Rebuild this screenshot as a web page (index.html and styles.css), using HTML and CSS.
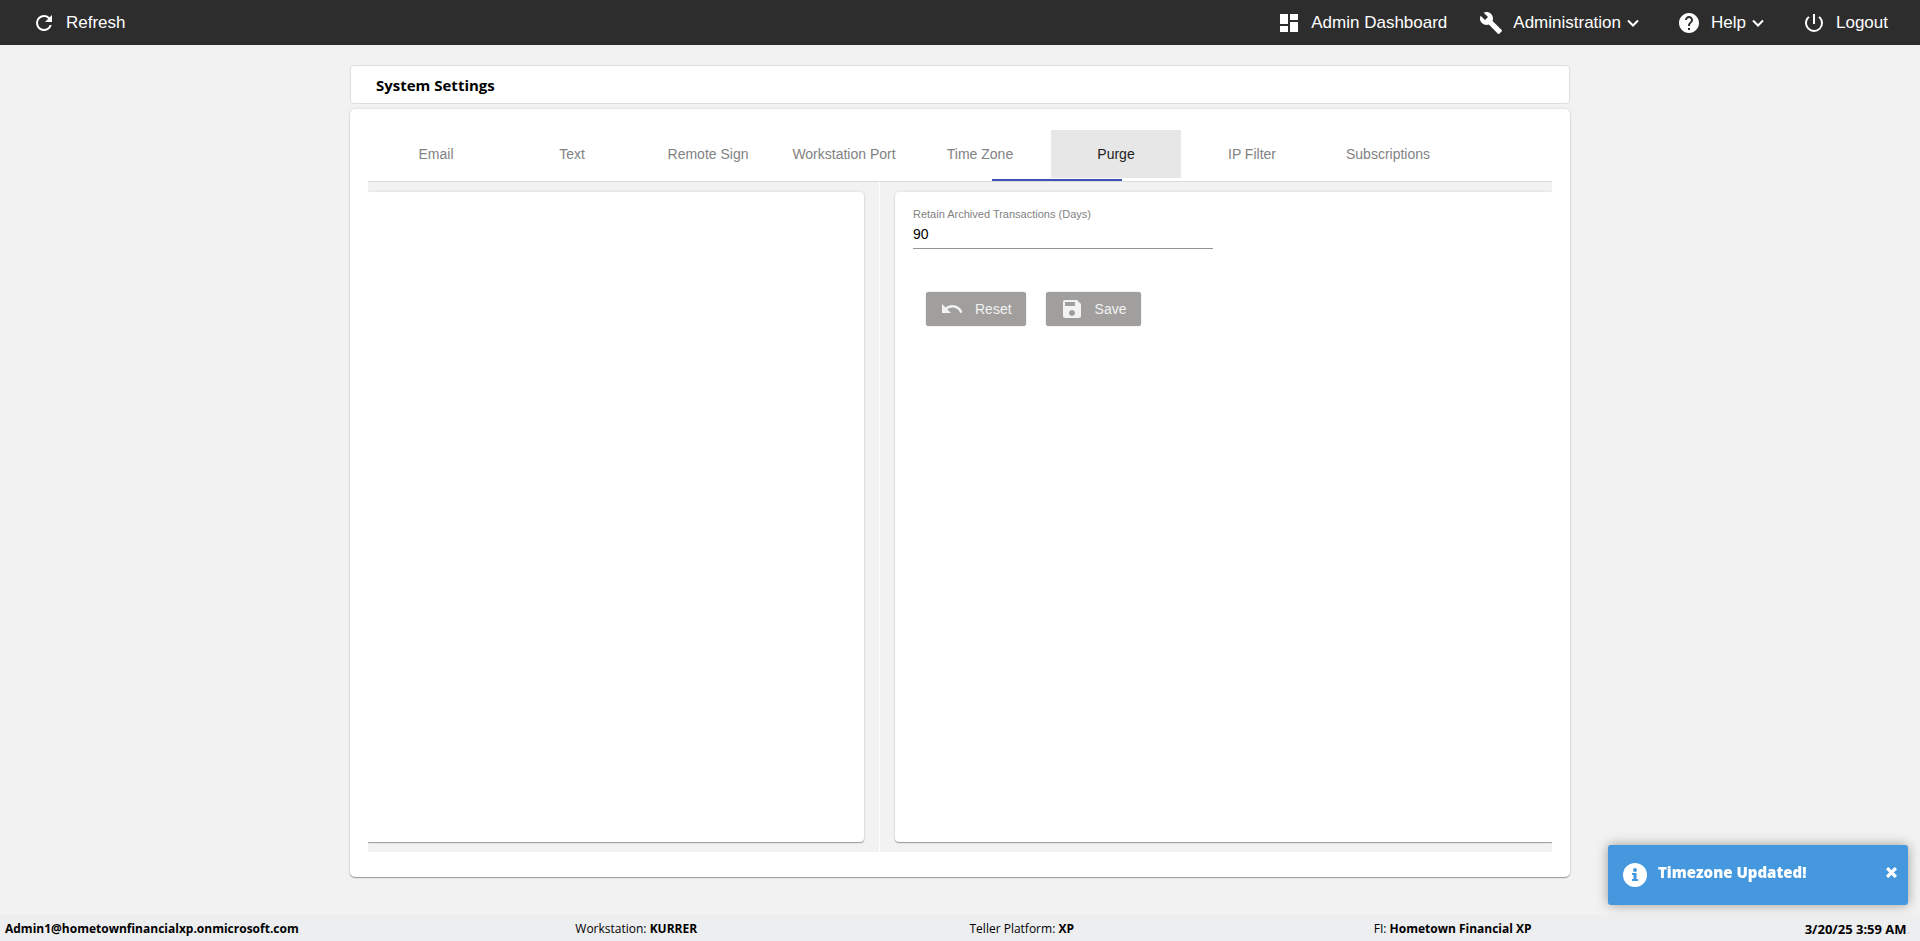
FILE: index.html
```html
<!DOCTYPE html>
<html lang="en">
<head>
<meta charset="utf-8">
<title>System Settings</title>
<link rel="stylesheet" href="styles.css">
</head>
<body>
<header class="topbar">
  <button class="nav-item nav-refresh" type="button">
    <svg class="icon" viewBox="0 0 24 24"><path d="M17.65 6.35A7.96 7.96 0 0 0 12 4a8 8 0 1 0 7.73 10h-2.08A6 6 0 1 1 12 6c1.66 0 3.14.69 4.22 1.78L13 11h7V4z"/></svg>
    <span>Refresh</span>
  </button>
  <nav class="nav-right">
    <a class="nav-item nav-dashboard" href="#">
      <svg class="icon" viewBox="0 0 24 24"><path d="M3 13h8V3H3v10zm0 8h8v-6H3v6zm10 0h8V11h-8v10zm0-18v6h8V3h-8z"/></svg>
      <span>Admin Dashboard</span>
    </a>
    <button class="nav-item nav-admin" type="button">
      <svg class="icon" viewBox="0 0 24 24"><path d="M22.7 19l-9.1-9.1c.9-2.3.4-5-1.5-6.9-2-2-5-2.4-7.4-1.3L9 6 6 9 1.6 4.7C.4 7.1.9 10.1 2.9 12.1c1.9 1.9 4.6 2.4 6.9 1.5l9.1 9.1c.4.4 1 .4 1.4 0l2.3-2.3c.5-.4.5-1.1.1-1.4z"/></svg>
      <span>Administration</span>
      <svg class="chevron" viewBox="0 0 12 8"><path d="M1 1.5l5 5 5-5"/></svg>
    </button>
    <button class="nav-item nav-help" type="button">
      <svg class="icon" viewBox="0 0 24 24"><path d="M12 2C6.48 2 2 6.48 2 12s4.48 10 10 10 10-4.48 10-10S17.52 2 12 2zm1 17h-2v-2h2v2zm2.07-7.75l-.9.92C13.45 12.9 13 13.5 13 15h-2v-.5c0-1.1.45-2.1 1.17-2.83l1.24-1.26c.37-.36.59-.86.59-1.41 0-1.1-.9-2-2-2s-2 .9-2 2H8c0-2.21 1.79-4 4-4s4 1.79 4 4c0 .88-.36 1.68-.93 2.25z"/></svg>
      <span>Help</span>
      <svg class="chevron" viewBox="0 0 12 8"><path d="M1 1.5l5 5 5-5"/></svg>
    </button>
    <button class="nav-item nav-logout" type="button">
      <svg class="icon" viewBox="0 0 24 24"><path d="M13 3h-2v10h2V3zm4.83 2.17l-1.42 1.42A6.92 6.92 0 0 1 19 12a7 7 0 1 1-11.42-5.42L6.17 5.17A8.93 8.93 0 0 0 3 12a9 9 0 0 0 18 0c0-2.74-1.23-5.18-3.17-6.83z"/></svg>
      <span>Logout</span>
    </button>
  </nav>
</header>

<main class="page">
  <h1 class="title-card">System Settings</h1>
  <section class="settings-card">
    <div class="tabs" role="tablist">
      <button class="tab" type="button" role="tab">Email</button>
      <button class="tab" type="button" role="tab">Text</button>
      <button class="tab" type="button" role="tab">Remote Sign</button>
      <button class="tab" type="button" role="tab">Workstation Port</button>
      <button class="tab" type="button" role="tab">Time Zone</button>
      <button class="tab tab-active" type="button" role="tab" aria-selected="true">Purge</button>
      <button class="tab" type="button" role="tab">IP Filter</button>
      <button class="tab" type="button" role="tab">Subscriptions</button>
      <span class="ink-bar"></span>
    </div>
    <div class="panes">
      <div class="pane pane-left"><div class="panel panel-left"></div></div>
      <div class="pane pane-right">
        <form class="panel panel-right">
          <label class="field-label" for="retain-days">Retain Archived Transactions (Days)</label>
          <input class="field-input" id="retain-days" type="text" value="90">
          <div class="actions">
            <button class="btn" type="button">
              <svg class="icon" viewBox="0 0 24 24"><path d="M12.5 8c-2.65 0-5.05.99-6.9 2.6L2 7v9h9l-3.62-3.62c1.39-1.16 3.16-1.88 5.12-1.88 3.54 0 6.55 2.31 7.6 5.5l2.37-.78C21.08 11.03 17.15 8 12.5 8z"/></svg>
              <span>Reset</span>
            </button>
            <button class="btn" type="button">
              <svg class="icon" viewBox="0 0 24 24"><path d="M17 3H5a2 2 0 0 0-2 2v14c0 1.1.89 2 2 2h14c1.1 0 2-.9 2-2V7l-4-4zm-5 16c-1.66 0-3-1.34-3-3s1.34-3 3-3 3 1.34 3 3-1.34 3-3 3zm3-10H5V5h10v4z"/></svg>
              <span>Save</span>
            </button>
          </div>
        </form>
      </div>
    </div>
  </section>
</main>

<footer class="statusbar">
  <div><b>Admin1@hometownfinancialxp.onmicrosoft.com</b></div>
  <div>Workstation: <b>KURRER</b></div>
  <div>Teller Platform: <b>XP</b></div>
  <div>FI: <b>Hometown Financial XP</b></div>
  <div class="clock"><b>3/20/25 3:59 AM</b><span class="dot">.</span></div>
</footer>

<div class="toast" role="status">
  <svg class="icon" viewBox="0 0 24 24"><circle cx="12" cy="12" r="12" fill="#fff"/><circle cx="12" cy="7" r="2" fill="#4598de"/><path fill="#4598de" d="M9 10h4.500v6H15v2H9v-2h1.500v-4H9z"/></svg>
  <span class="toast-text">Timezone Updated!</span>
  <button class="toast-close" type="button" aria-label="Close"><svg viewBox="0 0 10 10"><path d="M1 1l8 8m0-8l-8 8"/></svg></button>
</div>
</body>
</html>
```
FILE: styles.css
```css
* { box-sizing: border-box; }

body {
  margin: 0;
  min-height: 100vh;
  display: flex;
  flex-direction: column;
  background: #f2f2f2;
  color: #000;
  font-family: "Liberation Sans", Arial, sans-serif;
  font-size: 14px;
}

button {
  font: inherit;
  border: 0;
  padding: 0;
  background: none;
  cursor: pointer;
}

svg { display: block; flex: none; }
.icon { width: 24px; height: 24px; }

/* Top bar */
.topbar {
  display: flex;
  justify-content: space-between;
  height: 45px;
  padding: 0 32px;
  background: #2d2d2d;
}

.nav-right { display: flex; }

.nav-item {
  display: flex;
  align-items: center;
  gap: 10px;
  color: #fff;
  font-size: 17px;
  text-decoration: none;
}

.nav-item svg { fill: #fff; }
.nav-dashboard { margin-right: 32px; }
.nav-admin, .nav-help { margin-right: 38px; }
.nav-item .chevron {
  width: 12px;
  height: 8px;
  margin-left: -4px;
  fill: none;
  stroke: #fff;
  stroke-width: 2;
}

/* Settings */
.page {
  flex: 1;
  display: flex;
  flex-direction: column;
  gap: 5px;
  width: 100%;
  max-width: 1220px;
  margin: 0 auto;
  padding: 20px 0 38px;
}

.title-card {
  margin: 0;
  padding: 9px 25px 7px;
  border: 1px solid #ddd;
  border-radius: 4px;
  background: #fff;
  font: bold 15px/21px "Open Sans", "Noto Sans", sans-serif;
}

.settings-card {
  flex: 1;
  display: flex;
  flex-direction: column;
  padding: 21px 18px 25px;
  border-radius: 5px;
  background: #fff;
  box-shadow: 0 1px 1px #999, 0 0 3px rgba(0, 0, 0, .12);
}

.tabs {
  position: relative;
  display: flex;
  gap: 6px;
  height: 52px;
  padding: 0 3px;
  border-bottom: 1px solid #ddd;
}

.tab {
  width: 130px;
  height: 48px;
  color: #828282;
}

.tab-active { background: #e7e7e7; color: #212121; }

.ink-bar {
  position: absolute;
  left: 624px;
  bottom: 0;
  width: 130px;
  height: 2px;
  background: #3f51b5;
}

.panes {
  flex: 1;
  display: grid;
  grid-template-columns: 511fr 673fr;
  background: #f2f2f2;
}

.pane { display: flex; overflow: hidden; }
.pane-left { padding: 10px 15px 10px 0; }
.pane-right { padding: 10px 0 10px 15px; border-left: 1px solid #fff; }

.panel {
  flex: 1;
  background: #fff;
  box-shadow: 0 1px 1px #999, 0 0 3px rgba(0, 0, 0, .12);
}

.panel-left { border-radius: 0 4px 4px 0; }
.panel-right {
  border-radius: 4px 0 0 4px;
  padding: 15px 18px;
}

.field-label {
  display: block;
  color: #828282;
  font-size: 11px;
  line-height: 14px;
}

.field-input {
  display: block;
  width: 300px;
  height: 28px;
  padding: 0 0 1px;
  border: 0;
  border-bottom: 1px solid #949494;
  outline: 0;
  background: none;
  color: #000;
  font: inherit;
}

.actions {
  display: flex;
  gap: 20px;
  padding: 43px 13px;
}

.btn {
  display: flex;
  align-items: center;
  gap: 11px;
  height: 34px;
  padding: 0 14px;
  border-radius: 3px;
  background: #a09f9e;
  color: #f2f2f2;
  box-shadow: 0 0 1px #888;
}

.btn .icon { fill: #f2f2f2; }

/* Status bar */
.statusbar {
  display: grid;
  grid-template-columns: 570fr 394fr 404fr 300fr 236fr;
  height: 26px;
  padding: 2px 10px 0 5px;
  background: #edeef0;
  font: 12px/24px "Open Sans", "Noto Sans", sans-serif;
  white-space: nowrap;
}

.clock { text-align: right; font-size: 13px; }
.dot { color: #ccc; }

/* Notification */
.toast {
  position: fixed;
  right: 12px;
  bottom: 36px;
  display: flex;
  align-items: center;
  width: 300px;
  height: 60px;
  padding: 0 11px 0 15px;
  border-radius: 3px;
  background: #4598de;
  color: #fff;
  box-shadow: 0 0 12px #999;
}

.toast-text {
  flex: 1;
  padding: 0 0 6px 11px;
  font: 800 15px/20px "Open Sans", "Noto Sans", sans-serif;
}
.toast-close { padding-bottom: 6px; }
.toast-close svg {
  width: 11px;
  height: 11px;
  fill: none;
  stroke: #fff;
  stroke-width: 3;
}
```
